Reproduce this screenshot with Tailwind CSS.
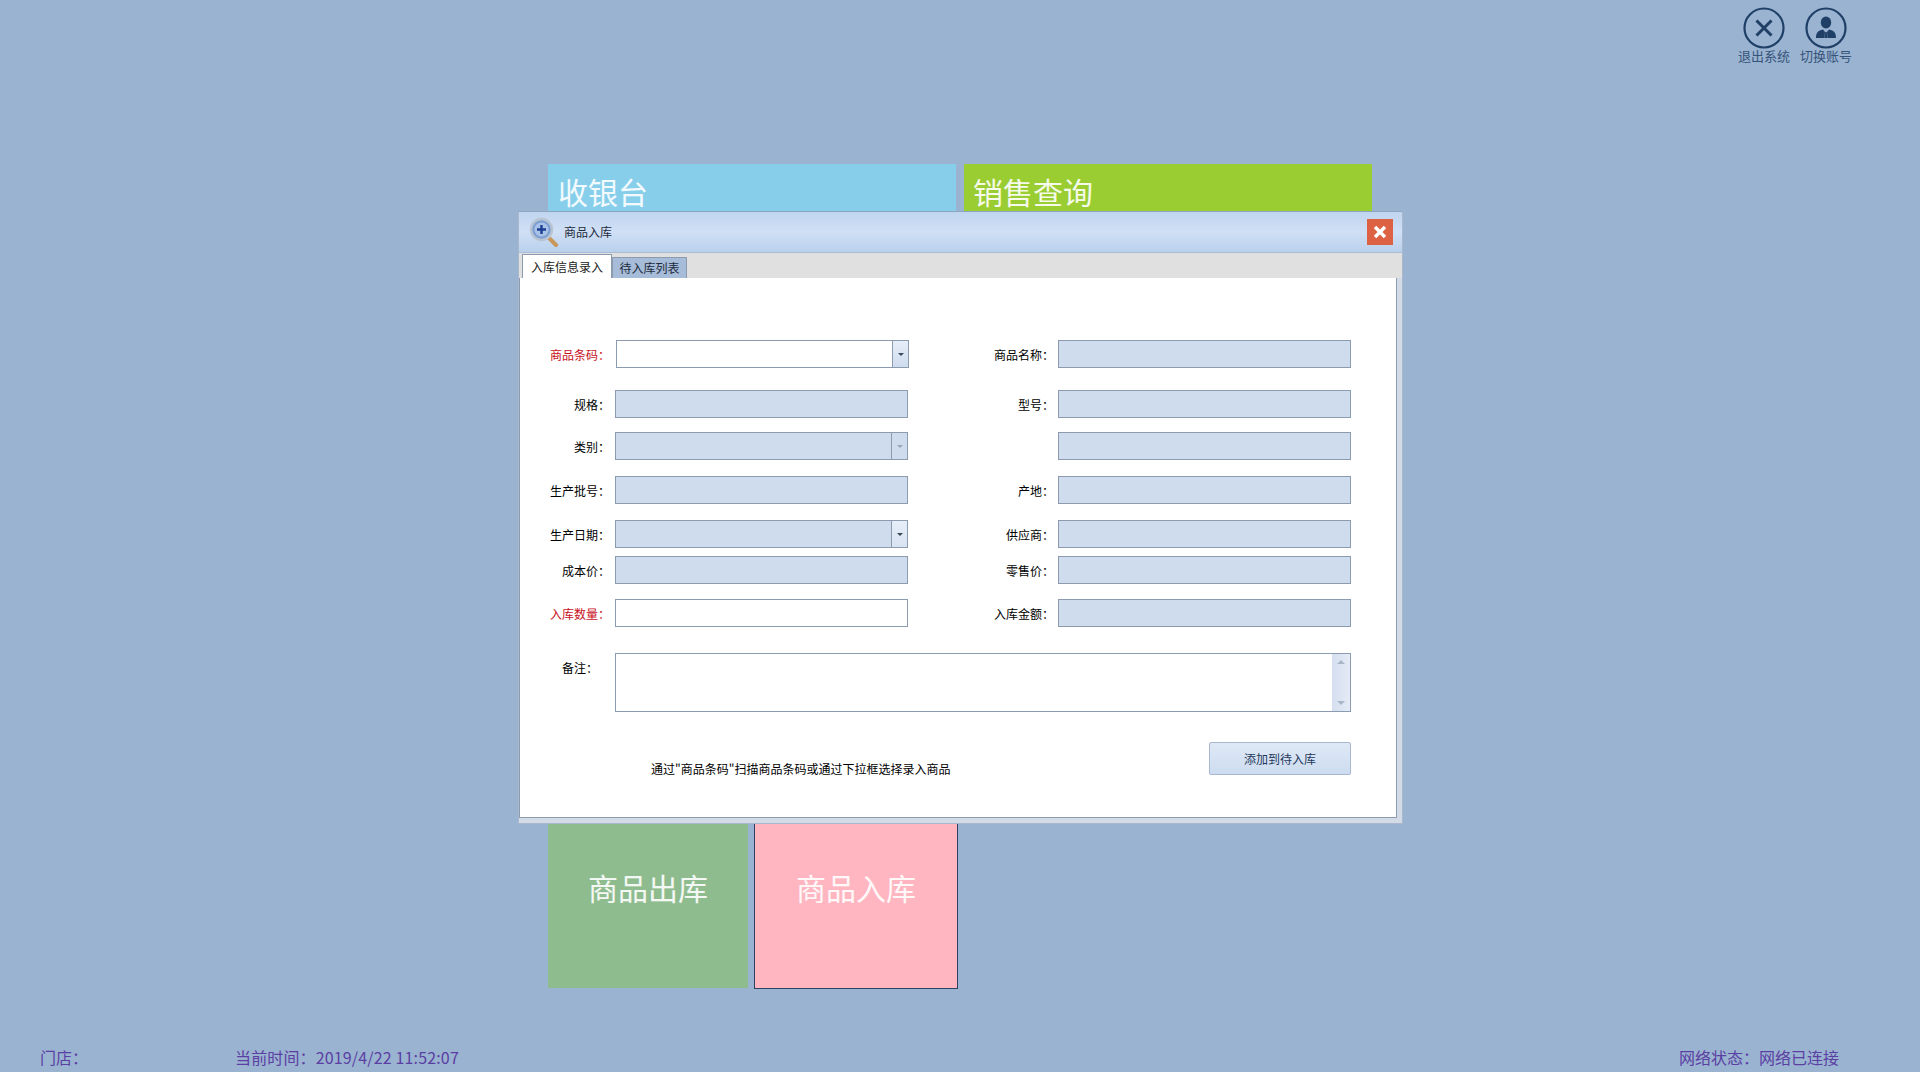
<!DOCTYPE html>
<html lang="zh-CN">
<head>
    <meta charset="UTF-8">
    <title>商品入库</title>
    <script src="https://cdn.jsdelivr.net/npm/@tailwindcss/browser@4"></script>
</head>
<body class="relative h-[1072px] overflow-hidden bg-[#99b3d1] font-['Noto_Sans_CJK_SC',sans-serif] flex flex-col">

    <!-- top right actions -->
    <header class="h-[164px] shrink-0 flex justify-end gap-[10px] pt-[7px] pr-[68px] text-[13px] leading-[18px] text-[#36547a]">
        <button class="w-[52px] flex flex-col items-center">
            <svg width="42" height="42" viewBox="0 0 42 42" fill="none">
                <circle cx="21" cy="21" r="19.5" stroke="#1f3f66" stroke-width="2.2"/>
                <path d="M13.5 13.5 L28.5 28.5 M28.5 13.5 L13.5 28.5" stroke="#1f3f66" stroke-width="3"/>
            </svg>
            <span class="whitespace-nowrap -mt-[2px]">退出系统</span>
        </button>
        <button class="w-[52px] flex flex-col items-center">
            <svg width="42" height="42" viewBox="0 0 42 42" fill="none">
                <circle cx="21" cy="21" r="19.5" stroke="#1f3f66" stroke-width="2.2"/>
                <ellipse cx="21" cy="15.5" rx="5.2" ry="6" fill="#1f3f66"/>
                <path d="M11 31 C11 25.5 13 23.5 18 22.5 L20 25 L19.5 31 Z M31 31 C31 25.5 29 23.5 24 22.5 L22 25 L22.5 31 Z M20.2 25 H21.8 L22.2 31 H19.8 Z" fill="#1f3f66"/>
            </svg>
            <span class="whitespace-nowrap -mt-[2px]">切换账号</span>
        </button>
    </header>

    <!-- function tiles behind the dialog -->
    <main class="ml-[548px] text-[30px] leading-[40px] text-white/90">
        <div class="flex gap-[8px] h-[200px]">
            <div class="w-[408px] bg-[#87ceeb] pl-[10px] pt-[7px]">收银台</div>
            <div class="w-[408px] bg-[#9acd32] pl-[9px] pt-[7px]">销售查询</div>
        </div>
        <div class="flex mt-[422px]">
            <div class="w-[200px] h-[200px] mt-[2px] bg-[#8fbc8f] flex justify-center pt-[79px]">商品出库</div>
            <div class="w-[204px] h-[203px] ml-[6px] bg-[#ffb6c1] border border-[#2d4163] flex justify-center pt-[80px]">商品入库</div>
        </div>
    </main>

    <!-- status bar -->
    <footer class="mt-auto flex pb-[3px] pl-[40px] pr-[81px] text-[16px] leading-[24px] text-[#5b3fa3]">
        <span class="w-[195px]">门店：</span>
        <span class="tracking-[0.15px]">当前时间：2019/4/22 11:52:07</span>
        <span class="ml-auto">网络状态：网络已连接</span>
    </footer>

    <!-- dialog -->
    <div class="absolute left-[518px] top-[211px] w-[885px] h-[613px] bg-[#d3dbe6] border border-[#a9b8cc] border-t-[#8ea5c2] flex flex-col text-[12px] leading-[16px] text-black">
        <div class="h-[41px] shrink-0 flex items-center bg-gradient-to-b from-[#c0d5ef] via-[#d0e0f6] to-[#b9d0ec] border-b border-[#a9bdd6]">
            <svg class="ml-[10px]" width="30" height="30" viewBox="0 0 30 30" fill="none">
                <path d="M19 20 L27 28" stroke="#c9965c" stroke-width="4" stroke-linecap="round"/>
                <circle cx="12.5" cy="12.5" r="10.5" fill="#7d9fd4" stroke="#b9c4d2" stroke-width="2.5"/>
                <circle cx="12.5" cy="12.5" r="7" fill="#a9c3e8"/>
                <path d="M12.5 8 V17 M8 12.5 H17" stroke="#1c3f91" stroke-width="2.4"/>
            </svg>
            <span class="ml-[5px] text-[#1e2b3d]">商品入库</span>
            <button class="ml-auto mr-[9px] w-[26px] h-[26px] bg-[#dc6243] flex items-center justify-center">
                <svg width="14" height="14" viewBox="0 0 14 14"><path d="M2 2 L12 12 M12 2 L2 12" stroke="#fff" stroke-width="3.4"/></svg>
            </button>
        </div>

        <div class="h-[25px] shrink-0 bg-[#e0e0e0] flex items-end pl-[3px] relative z-10">
            <div class="w-[90px] h-[24px] bg-white border border-b-0 border-[#8c9bb0] text-center leading-[23px] text-[#1b1b1b]">入库信息录入</div>
            <div class="w-[75px] h-[21px] bg-[#a6bcd8] border border-b-0 border-[#8c9bb0] text-center leading-[20px] text-[#1e2b3d]">待入库列表</div>
        </div>

        <div class="w-[878px] h-[541px] bg-white border border-[#8c9bb0] pt-[62px] -mt-px">
            <div class="flex h-[28px]">
                <label class="w-[90px] text-right pt-[7px] text-[#c8101c]">商品条码：</label>
                <div class="ml-[6px] w-[293px] border border-[#8c9bb0] flex bg-white">
                    <input class="flex-1 min-w-0 outline-none">
                    <span class="w-[16px] border-l border-[#8c9bb0] bg-gradient-to-b from-[#e6eef8] to-[#cfdcee] flex items-center justify-center">
                        <span class="w-0 h-0 border-x-[3px] border-x-transparent border-t-[3px] border-t-[#3b4656]"></span>
                    </span>
                </div>
                <label class="w-[145px] text-right pt-[7px]">商品名称：</label>
                <input class="ml-[4px] w-[293px] border border-[#8c9bb0] bg-[#cfdcee]" disabled>
            </div>
            <div class="flex h-[28px] mt-[22px]">
                <label class="w-[90px] text-right pt-[7px]">规格：</label>
                <input class="ml-[5px] w-[293px] border border-[#8c9bb0] bg-[#cfdcee]" disabled>
                <label class="w-[146px] text-right pt-[7px]">型号：</label>
                <input class="ml-[4px] w-[293px] border border-[#8c9bb0] bg-[#cfdcee]" disabled>
            </div>
            <div class="flex h-[28px] mt-[14px]">
                <label class="w-[90px] text-right pt-[7px]">类别：</label>
                <div class="ml-[5px] w-[293px] border border-[#8c9bb0] flex bg-[#cfdcee]">
                    <span class="flex-1"></span>
                    <span class="w-[16px] border-l border-[#8c9bb0] flex items-center justify-center">
                        <span class="w-0 h-0 border-x-[3px] border-x-transparent border-t-[3px] border-t-[#98a6b8]"></span>
                    </span>
                </div>
                <span class="w-[146px]"></span>
                <input class="ml-[4px] w-[293px] border border-[#8c9bb0] bg-[#cfdcee]" disabled>
            </div>
            <div class="flex h-[28px] mt-[16px]">
                <label class="w-[90px] text-right pt-[7px]">生产批号：</label>
                <input class="ml-[5px] w-[293px] border border-[#8c9bb0] bg-[#cfdcee]" disabled>
                <label class="w-[146px] text-right pt-[7px]">产地：</label>
                <input class="ml-[4px] w-[293px] border border-[#8c9bb0] bg-[#cfdcee]" disabled>
            </div>
            <div class="flex h-[28px] mt-[16px]">
                <label class="w-[90px] text-right pt-[7px]">生产日期：</label>
                <div class="ml-[5px] w-[293px] border border-[#8c9bb0] flex bg-[#cfdcee]">
                    <span class="flex-1"></span>
                    <span class="w-[16px] border-l border-[#8c9bb0] bg-gradient-to-b from-[#e6eef8] to-[#d8e3f2] flex items-center justify-center">
                        <span class="w-0 h-0 border-x-[3px] border-x-transparent border-t-[3px] border-t-[#3b4656]"></span>
                    </span>
                </div>
                <label class="w-[146px] text-right pt-[7px]">供应商：</label>
                <input class="ml-[4px] w-[293px] border border-[#8c9bb0] bg-[#cfdcee]" disabled>
            </div>
            <div class="flex h-[28px] mt-[8px]">
                <label class="w-[90px] text-right pt-[7px]">成本价：</label>
                <input class="ml-[5px] w-[293px] border border-[#8c9bb0] bg-[#cfdcee]" disabled>
                <label class="w-[146px] text-right pt-[7px]">零售价：</label>
                <input class="ml-[4px] w-[293px] border border-[#8c9bb0] bg-[#cfdcee]" disabled>
            </div>
            <div class="flex h-[28px] mt-[15px]">
                <label class="w-[90px] text-right pt-[7px] text-[#c8101c]">入库数量：</label>
                <input class="ml-[5px] w-[293px] border border-[#8c9bb0] bg-white">
                <label class="w-[146px] text-right pt-[7px]">入库金额：</label>
                <input class="ml-[4px] w-[293px] border border-[#8c9bb0] bg-[#cfdcee]" disabled>
            </div>
            <div class="flex h-[59px] mt-[26px]">
                <label class="w-[78px] text-right pt-[7px]">备注：</label>
                <div class="ml-[17px] w-[736px] border border-[#8c9bb0] flex">
                    <span class="flex-1"></span>
                    <span class="w-[18px] bg-gradient-to-r from-[#d5dff0] to-[#e4ebf6] flex flex-col items-center justify-between py-[6px]">
                        <span class="w-0 h-0 border-x-[4px] border-x-transparent border-b-[4px] border-b-[#a9b6c8]"></span>
                        <span class="w-0 h-0 border-x-[4px] border-x-transparent border-t-[4px] border-t-[#a9b6c8]"></span>
                    </span>
                </div>
            </div>
            <div class="flex mt-[30px] pl-[131px] pr-[45px]">
                <p class="mt-[19px] whitespace-nowrap">通过"商品条码"扫描商品条码或通过下拉框选择录入商品</p>
                <button class="ml-auto w-[142px] h-[33px] rounded-[2px] border border-[#a7b8cf] bg-gradient-to-b from-[#dfe9f6] to-[#cddcf0] text-[#1e395b]">添加到待入库</button>
            </div>
        </div>
    </div>

</body>
</html>
